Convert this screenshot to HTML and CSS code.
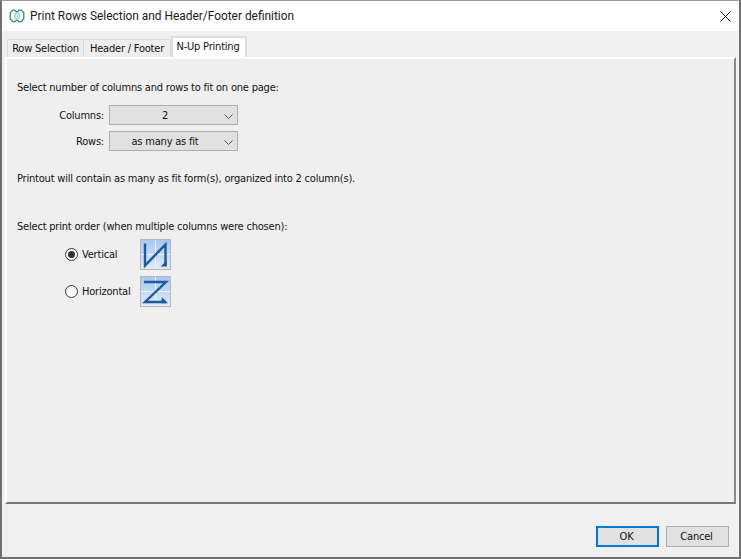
FILE: index.html
```html
<!DOCTYPE html>
<html lang="en">
<head>
<meta charset="utf-8">
<title>Print Rows Selection and Header/Footer definition</title>
<link rel="stylesheet" href="styles.css">
</head>
<body>
<div class="window">
  <header class="titlebar">
    <svg class="app-icon" width="16" height="16" viewBox="0 0 16 16" fill="none" stroke-width="1.3" stroke-linejoin="round">
      <path d="M8 4.2 5.9 2.2H3.6L1.2 5v5.5l2.4 3.2h2.3L8 11.6" stroke="#2b8c88"/>
      <path d="M8 4.2l2.1-2h2.3L14.8 5v5.5l-2.4 3.2h-2.3L8 11.6" stroke="#2b8c88"/>
      <path d="M8 4.2l-2.4 2v3.4L8 11.6l2.4-2V6.2z" fill="#cfe9e7" stroke="#86c8c3" stroke-width="1"/>
    </svg>
    <span class="title">Print Rows Selection and Header/Footer definition</span>
    <svg class="close" width="11" height="11" viewBox="0 0 11 11" stroke="#111" stroke-width="1" fill="none">
      <path d="M0.5 0.5l10 10M10.5 0.5l-10 10"/>
    </svg>
  </header>
  <nav class="tabs">
    <div class="tab tab-first">Row Selection</div>
    <div class="tab tab-second">Header / Footer</div>
    <div class="tab tab-active">N-Up Printing</div>
  </nav>
  <main class="panel">
    <p class="line">Select number of columns and rows to fit on one page:</p>
    <div class="fields">
      <div class="field">
        <label class="field-label">Columns:</label>
        <div class="select"><span class="select-value">2</span><svg class="chev" width="9" height="5" viewBox="0 0 9 5" fill="none" stroke="#555"><path d="M0.5 0.5l4 4 4-4"/></svg></div>
      </div>
      <div class="field">
        <label class="field-label">Rows:</label>
        <div class="select"><span class="select-value">as many as fit</span><svg class="chev" width="9" height="5" viewBox="0 0 9 5" fill="none" stroke="#555"><path d="M0.5 0.5l4 4 4-4"/></svg></div>
      </div>
    </div>
    <p class="line summary">Printout will contain as many as fit form(s), organized into 2 column(s).</p>
    <p class="line order">Select print order (when multiple columns were chosen):</p>
    <div class="options">
      <div class="option">
        <span class="radio radio-on"></span>
        <span class="option-label">Vertical</span>
        <span class="thumb">
          <svg width="29" height="29" viewBox="0 0 29 29">
            <defs>
              <linearGradient id="sky" x1="0" y1="0" x2="0" y2="1">
                <stop offset="0" stop-color="#a9c8f0"/>
                <stop offset="0.5" stop-color="#c2d9f5"/>
                <stop offset="1" stop-color="#e0ecfb"/>
              </linearGradient>
            </defs>
            <rect width="29" height="29" fill="url(#sky)"/>
            <path d="M14.5 0v29M0 14.5h29" stroke="#eef4fc" stroke-width="1"/>
            <path d="M4 3.5v22L24.5 4.5v21" fill="none" stroke="#1b5aa0" stroke-width="2.4"/>
            <path d="M25.7 26.5h-6l6-6z" fill="#1b5aa0"/>
          </svg>
        </span>
      </div>
      <div class="option">
        <span class="radio"></span>
        <span class="option-label">Horizontal</span>
        <span class="thumb">
          <svg width="29" height="29" viewBox="0 0 29 29">
            <rect width="29" height="29" fill="url(#sky)"/>
            <path d="M14.5 0v29M0 14.5h29" stroke="#eef4fc" stroke-width="1"/>
            <path d="M3 5h22L4 25h21" fill="none" stroke="#1b5aa0" stroke-width="2.4"/>
            <path d="M27 26.2h-7l1-6z" fill="#1b5aa0"/>
          </svg>
        </span>
      </div>
    </div>
  </main>
  <footer class="actions">
    <button class="btn btn-default" type="button">OK</button>
    <button class="btn" type="button">Cancel</button>
  </footer>
</div>
</body>
</html>
```
FILE: styles.css
```css
* { box-sizing: border-box; }
html, body { margin: 0; height: 100%; }
body {
  font-family: "DejaVu Sans", "Liberation Sans", sans-serif;
  font-stretch: condensed;
  font-size: 11px;
  letter-spacing: -0.2px;
  color: #111;
  background: #fff;
  overflow: hidden;
}
.window {
  width: 741px;
  height: 559px;
  display: flex;
  flex-direction: column;
  background: #f0f0f0;
  border: 1px solid #707070;
  border-width: 1px 2px 2px 2px;
  border-top-color: #9a9a9a;
}
.titlebar {
  flex: none;
  height: 30px;
  background: #fff;
  display: flex;
  align-items: center;
  padding: 0 8px 0 7px;
}
.app-icon { flex: none; }
.title {
  margin-left: 5px;
  font-family: Roboto, "Liberation Sans", sans-serif;
  font-stretch: normal;
  font-size: 11.9px;
  letter-spacing: 0;
  color: #1a1a1a;
  flex: 1;
}
.close { flex: none; }
.tabs {
  flex: none;
  height: 26px;
  display: flex;
  align-items: flex-end;
  padding-left: 5px;
}
.tab {
  height: 18px;
  display: flex;
  align-items: center;
  justify-content: center;
  background: #eee;
  border: 1px solid #dcdcdc;
  border-bottom: none;
}
.tab-first { width: 77px; }
.tab-second { width: 87px; border-left: none; }
.tab-active {
  width: 76px;
  height: 21px;
  background: #fff;
  border: 2px solid #dedede;
  border-bottom: none;
  padding: 0 2px 3px 0;
}
.panel {
  flex: none;
  height: 447px;
  margin: 0 3px;
  background: #efefef;
  border-left: 2px solid #fff;
  border-top: 2px solid #fff;
  border-right: 2px solid #8a8a8a;
  border-bottom: 2px solid #777;
  padding: 22px 0 0 10px;
}
.line { margin: 0; line-height: 14px; }
.fields {
  margin-top: 10px;
  display: flex;
  flex-direction: column;
  gap: 6px;
}
.field { display: flex; align-items: center; }
.field-label {
  width: 92px;
  text-align: right;
  padding-right: 5px;
}
.select {
  width: 129px;
  height: 20px;
  background: #e1e1e1;
  border: 1px solid #adadad;
  display: flex;
  align-items: center;
  position: relative;
}
.select-value { width: 110px; text-align: center; }
.chev { position: absolute; right: 4px; top: 8px; }
.summary { margin-top: 21px; }
.order { margin-top: 34px; }
.options {
  margin-top: 4px;
  display: flex;
  flex-direction: column;
  gap: 5px;
}
.option {
  display: flex;
  align-items: center;
  padding-left: 48px;
  height: 32px;
}
.radio {
  flex: none;
  width: 13px;
  height: 13px;
  border-radius: 50%;
  border: 1px solid #333;
  background: #fff;
  position: relative;
}
.radio-on::after {
  content: "";
  position: absolute;
  left: 2px;
  top: 2px;
  width: 7px;
  height: 7px;
  border-radius: 50%;
  background: #333;
}
.option-label { width: 62px; padding-left: 4px; }
.thumb {
  flex: none;
  width: 31px;
  height: 31px;
  border: 1px solid #b8b8b8;
  display: block;
  background: #cfe2f8;
}
.thumb svg { display: block; }
.actions {
  flex: 1;
  display: flex;
  justify-content: flex-end;
  align-items: flex-start;
  gap: 7px;
  padding: 22px 10px 0 0;
}
.btn {
  width: 63px;
  height: 21px;
  padding: 0 2px 0 0;
  background: #e1e1e1;
  border: 1px solid #adadad;
  font: inherit;
  letter-spacing: inherit;
  color: #111;
}
.btn-default { border: 2px solid #0078d7; }
```
